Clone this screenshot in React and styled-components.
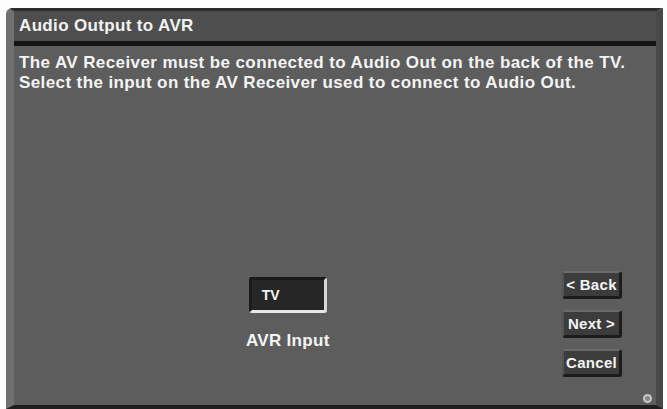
import React from 'react';
import styled, { createGlobalStyle } from 'styled-components';

const GlobalStyle = createGlobalStyle`
  html, body {
    margin: 0;
    padding: 0;
    background: #fdfdfd;
  }
  body {
    font-family: "Liberation Sans", Arial, sans-serif;
  }
`;

const Screen = styled.div`
  width: 667px;
  height: 409px;
  box-sizing: border-box;
  padding: 8px 4px 0 6px;
`;

const Panel = styled.div`
  height: 100%;
  display: flex;
  flex-direction: column;
  background: #5d5d5d;
  border-top: 3px solid #2c2c2c;
  border-left: 8px solid #707070;
  border-right: 7px solid #484848;
  border-bottom: 4px solid #1e1e1e;
  border-top-left-radius: 6px;
  box-sizing: border-box;
  position: relative;
`;

const TitleBar = styled.div`
  height: 30px;
  display: flex;
  align-items: center;
  padding-left: 5px;
  background: #4e4e4e;
  border-bottom: 5px solid #151515;
  color: #f2f2f2;
  font-weight: bold;
  font-size: 17px;
  letter-spacing: 0.35px;
`;

const Body = styled.div`
  flex: 1;
  display: flex;
  flex-direction: column;
  padding: 7px 34px 28px 5px;
  color: #f4f4f4;
  font-weight: bold;
`;

const Message = styled.p`
  margin: 0;
  font-size: 17px;
  line-height: 20px;
  letter-spacing: 0.4px;
  white-space: nowrap;
`;

const Footer = styled.div`
  margin-top: auto;
  display: flex;
  align-items: flex-start;
  justify-content: space-between;
`;

const InputGroup = styled.div`
  margin-left: 227px;
  margin-top: 6px;
  display: flex;
  flex-direction: column;
  align-items: center;
  gap: 18px;
`;

const InputBox = styled.div`
  width: 78px;
  height: 36px;
  box-sizing: border-box;
  display: flex;
  align-items: center;
  padding-left: 10px;
  background: #262626;
  border: 3px solid #1a1a1a;
  border-right-color: #d8d8d8;
  border-bottom-color: #e8e8e8;
  border-radius: 3px;
  font-size: 14px;
`;

const InputLabel = styled.div`
  font-size: 17px;
  letter-spacing: 0.3px;
`;

const ButtonColumn = styled.div`
  display: flex;
  flex-direction: column;
  gap: 11px;
`;

const NavButton = styled.div`
  width: 60px;
  height: 28px;
  box-sizing: border-box;
  display: flex;
  align-items: center;
  justify-content: center;
  background: #3c3c3c;
  border-top: 2px solid #6a6a6a;
  border-left: 2px solid #555;
  border-right: 3px solid #1c1c1c;
  border-bottom: 3px solid #1c1c1c;
  border-radius: 3px;
  font-size: 15px;
  letter-spacing: 0.3px;
`;

const CornerDot = styled.div`
  position: absolute;
  right: 4px;
  bottom: 2px;
  width: 9px;
  height: 9px;
  border-radius: 50%;
  border: 2px solid #c8c8c8;
  box-sizing: border-box;
  background: #888;
`;

export default function App() {
  return (
    <>
      <GlobalStyle />
      <Screen>
        <Panel>
          <TitleBar>Audio Output to AVR</TitleBar>
          <Body>
            <Message>
              The AV Receiver must be connected to Audio Out on the back of the TV.
              <br />
              Select the input on the AV Receiver used to connect to Audio Out.
            </Message>
            <Footer>
              <InputGroup>
                <InputBox>TV</InputBox>
                <InputLabel>AVR Input</InputLabel>
              </InputGroup>
              <ButtonColumn>
                <NavButton>&lt; Back</NavButton>
                <NavButton>Next &gt;</NavButton>
                <NavButton>Cancel</NavButton>
              </ButtonColumn>
            </Footer>
          </Body>
          <CornerDot />
        </Panel>
      </Screen>
    </>
  );
}
